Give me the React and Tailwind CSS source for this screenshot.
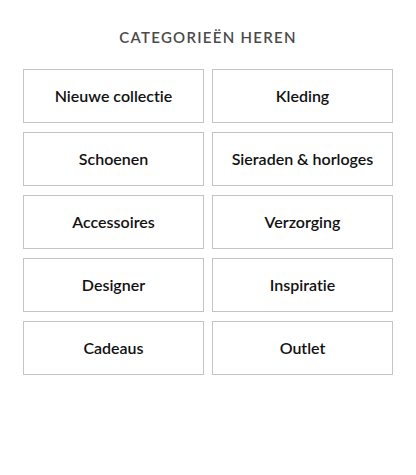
const categories = [
  'Nieuwe collectie',
  'Kleding',
  'Schoenen',
  'Sieraden & horloges',
  'Accessoires',
  'Verzorging',
  'Designer',
  'Inspiratie',
  'Cadeaus',
  'Outlet'
];

export default function App() {
  return (
    <div className="min-h-[475px] bg-white px-[23px] pt-[28px] font-['Lato','Noto_Sans',sans-serif] [font-variant-ligatures:none]">
      <h2 className="text-center text-[15px] font-semibold uppercase leading-[18px] tracking-[0.085em] text-[#4a4a4a]">
        Categorieën heren
      </h2>
      <div className="mt-[23px] grid grid-cols-2 gap-x-2 gap-y-[9px]">
        {categories.map((label) => (
          <a
            key={label}
            href="#"
            className="flex h-[54px] items-center justify-center border border-[#c4c4c4] text-[16px] font-semibold text-[#111]"
          >
            {label}
          </a>
        ))}
      </div>
    </div>
  );
}
